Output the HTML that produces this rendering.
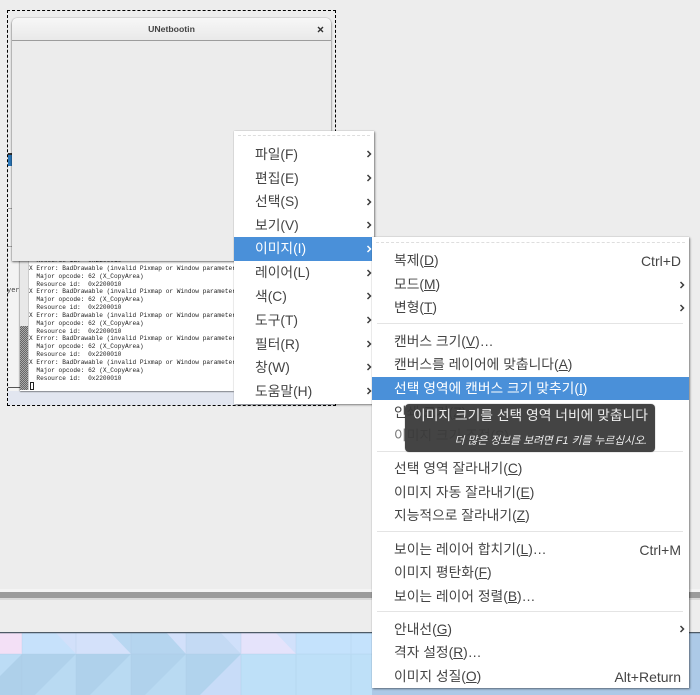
<!DOCTYPE html>
<html lang="ko"><head><meta charset="utf-8"><title>GIMP 이미지 메뉴</title>
<style>
html,body{margin:0;padding:0}
body{width:700px;height:695px;position:relative;overflow:hidden;background:#ededed;font-family:"Liberation Sans","Noto Sans CJK KR",sans-serif;color:#3a3a3a}
.a{position:absolute}
.menu{position:absolute;background:#fff;box-shadow:1px 1px 2px rgba(0,0,0,.45),0 0 1px rgba(0,0,0,.25)}
.t{position:absolute;white-space:pre;font-size:13.8px;line-height:20px;height:20px;margin-top:1px;color:#444;filter:blur(.25px)}
.s{position:absolute;white-space:pre;font-size:14px;line-height:20px;height:20px;margin-top:1px;color:#444;text-align:right;filter:blur(.25px)}
.sep{position:absolute;height:1px;background:#e4e4e4;left:5px;width:306px}
.hl{position:absolute;background:#4a90d9}
u{text-underline-offset:1px}
svg.ar{position:absolute;width:6px;height:10px;overflow:visible}
.term{position:absolute;left:29px;width:205px;overflow:hidden;font:6.17px/7.85px "Liberation Mono",monospace;color:#222;white-space:pre;filter:blur(.2px)}
</style></head><body>

<!-- wallpaper -->
<svg class="a" style="left:0;top:632px" width="700" height="63" viewBox="0 632 700 63">
<rect x="0" y="632" width="700" height="63" fill="#b9daf2"/>
<rect x="0" y="632" width="22" height="22" fill="#f3e0f6"/>
<rect x="22" y="632" width="54" height="22" fill="#c6e1fb"/>
<polygon points="55,632 76,632 76,654" fill="#d2e0fa"/>
<rect x="76" y="632" width="55" height="22" fill="#b8d7f1"/>
<polygon points="76,632 110,632 131,654 76,654" fill="#d4e1fa"/>
<rect x="131" y="632" width="55" height="22" fill="#d2e0fa"/>
<polygon points="131,632 166,632 186,654 131,654" fill="#b5d5ef"/>
<rect x="186" y="632" width="55" height="22" fill="#d0e0fa"/>
<polygon points="186,632 220,632 241,654 186,654" fill="#c4daf4"/>
<rect x="241" y="632" width="55" height="22" fill="#d1e1fb"/>
<polygon points="241,632 275,632 296,654 241,654" fill="#e5e3fb"/>
<rect x="296" y="632" width="404" height="22" fill="#c4e2fc"/>
<rect x="0" y="654" width="22" height="41" fill="#aed0ea"/>
<polygon points="0,654 22,654 0,676" fill="#bcdcf5"/>
<polygon points="22,654 76,654 35,695 22,695" fill="#afd1eb"/>
<polygon points="76,654 131,654 90,695 76,695" fill="#afd1eb"/>
<polygon points="131,654 186,654 145,695 131,695" fill="#b0d2ec"/>
<polygon points="186,654 241,654 200,695 186,695" fill="#b1d3ed"/>
<polygon points="241,654 241,695 200,695" fill="#c8dcf8"/>
<rect x="241" y="654" width="131" height="41" fill="#bee0f8"/>
<rect x="372" y="632" width="328" height="63" fill="#acc9e7"/>
<path d="M22 632V695M76 632V695M131 632V695M186 632V695M241 632V695M296 632V695M351 632V695M0 654H372" stroke="#a9c8e2" stroke-opacity=".3" stroke-width="1" fill="none"/>
<rect x="0" y="632" width="700" height="1" fill="#4d5a66"/>
<rect x="0" y="633" width="700" height="1" fill="#4d5a66" fill-opacity=".25"/>
</svg>

<!-- window band -->
<div class="a" style="left:0;top:589px;width:700px;height:3px;background:#f4f4f4"></div>
<div class="a" style="left:0;top:592px;width:700px;height:6px;background:#9b9b9b"></div>
<div class="a" style="left:0;top:598px;width:700px;height:2px;background:#d9d9d9"></div>

<!-- canvas remnants -->
<div class="a" style="left:8px;top:391px;width:327px;height:14px;background:#e2e6f0"></div>
<div class="a" style="left:9px;top:150px;width:11px;height:241px;background:#f3f3f3"></div>
<div class="a" style="left:8px;top:153px;width:4px;height:2px;background:#333"></div>
<div class="a" style="left:8px;top:155px;width:4px;height:11px;background:#2a76b8"></div>
<div class="a" style="left:8px;top:208px;width:4px;height:1px;background:#aaa"></div>
<div class="a" style="left:8px;top:246px;width:4px;height:1px;background:#aaa"></div>
<div class="a" style="left:8px;top:387px;width:12px;height:1px;background:#555"></div>
<div class="a" style="left:7px;top:286px;width:13px;height:10px;font:7px/10px 'Liberation Mono',monospace;color:#444">yer</div>

<!-- terminal -->
<div class="a" style="left:20px;top:250px;width:214px;height:141px;background:#fff;box-shadow:0 1px 1px rgba(0,0,0,.4),-1px 0 1px rgba(0,0,0,.2)"></div>
<div class="a" style="left:20px;top:250px;width:8px;height:76px;background:#e8e8e8"></div>
<div class="a" style="left:20px;top:326px;width:8px;height:64px;background:repeating-conic-gradient(#666 0 25%,#aaa 0 50%) 0 0/2px 2px"></div>
<div class="a" style="left:28px;top:250px;width:1px;height:140px;background:#ccc"></div>
<div class="term" style="top:257px">  Resource id:  0x2200010
X Error: BadDrawable (invalid Pixmap or Window parameter
  Major opcode: 62 (X_CopyArea)
  Resource id:  0x2200010
X Error: BadDrawable (invalid Pixmap or Window parameter
  Major opcode: 62 (X_CopyArea)
  Resource id:  0x2200010
X Error: BadDrawable (invalid Pixmap or Window parameter
  Major opcode: 62 (X_CopyArea)
  Resource id:  0x2200010
X Error: BadDrawable (invalid Pixmap or Window parameter
  Major opcode: 62 (X_CopyArea)
  Resource id:  0x2200010
X Error: BadDrawable (invalid Pixmap or Window parameter
  Major opcode: 62 (X_CopyArea)
  Resource id:  0x2200010</div>
<div class="a" style="left:30px;top:382px;width:2px;height:6px;border:1px solid #222;background:#fff"></div>

<!-- selection -->
<div class="a" style="left:7px;top:10px;width:327px;height:394px;border:1px dashed #000;box-sizing:content-box"></div>

<!-- UNetbootin window -->
<div class="a" style="left:12px;top:18px;width:319px;height:243px;background:#ececec;border-radius:5px 5px 0 0;box-shadow:0 1px 2px rgba(0,0,0,.55),0 0 1px rgba(0,0,0,.4)"></div>
<div class="a" style="left:12px;top:18px;width:319px;height:22px;border-radius:5px 5px 0 0;background:linear-gradient(#f7f7f7,#e9e9e9);border-bottom:1px solid #9c9c9c"></div>
<div class="a" style="left:12px;top:23px;width:319px;text-align:center;font:bold 8.7px/13px 'Liberation Sans',sans-serif;color:#444">UNetbootin</div>
<svg class="a" style="left:317px;top:26px" width="7" height="7"><path d="M1 1L6 6M6 1L1 6" stroke="#333" stroke-width="1.4" fill="none"/></svg>

<!-- menu 2 -->
<div class="menu" style="left:234px;top:131px;width:140px;height:273px"></div>
<div class="a" style="left:238px;top:135px;width:132px;height:0;border-top:1px dashed #dedede"></div>
<div class="hl" style="left:234px;top:237px;width:138px;height:24px"></div>
<div class="t" style="left:255px;top:144px">파일(F)</div>
<div class="t" style="left:255px;top:168px">편집(E)</div>
<div class="t" style="left:255px;top:191px">선택(S)</div>
<div class="t" style="left:255px;top:215px">보기(V)</div>
<div class="t" style="left:255px;top:238px;color:#fff">이미지(I)</div>
<div class="t" style="left:255px;top:262px">레이어(L)</div>
<div class="t" style="left:255px;top:286px">색(C)</div>
<div class="t" style="left:255px;top:310px">도구(T)</div>
<div class="t" style="left:255px;top:334px">필터(R)</div>
<div class="t" style="left:255px;top:357px">창(W)</div>
<div class="t" style="left:255px;top:381px">도움말(H)</div>
<svg class="ar" style="left:366px;top:149px"><path d="M1.5 2L4.5 5L1.5 8" stroke="#3d3d3d" stroke-width="1.5" fill="none"/></svg>
<svg class="ar" style="left:366px;top:173px"><path d="M1.5 2L4.5 5L1.5 8" stroke="#3d3d3d" stroke-width="1.5" fill="none"/></svg>
<svg class="ar" style="left:366px;top:197px"><path d="M1.5 2L4.5 5L1.5 8" stroke="#3d3d3d" stroke-width="1.5" fill="none"/></svg>
<svg class="ar" style="left:366px;top:220px"><path d="M1.5 2L4.5 5L1.5 8" stroke="#3d3d3d" stroke-width="1.5" fill="none"/></svg>
<svg class="ar" style="left:366px;top:244px"><path d="M1.5 2L4.5 5L1.5 8" stroke="#fff" stroke-width="1.5" fill="none"/></svg>
<svg class="ar" style="left:366px;top:268px"><path d="M1.5 2L4.5 5L1.5 8" stroke="#3d3d3d" stroke-width="1.5" fill="none"/></svg>
<svg class="ar" style="left:366px;top:291px"><path d="M1.5 2L4.5 5L1.5 8" stroke="#3d3d3d" stroke-width="1.5" fill="none"/></svg>
<svg class="ar" style="left:366px;top:315px"><path d="M1.5 2L4.5 5L1.5 8" stroke="#3d3d3d" stroke-width="1.5" fill="none"/></svg>
<svg class="ar" style="left:366px;top:339px"><path d="M1.5 2L4.5 5L1.5 8" stroke="#3d3d3d" stroke-width="1.5" fill="none"/></svg>
<svg class="ar" style="left:366px;top:362px"><path d="M1.5 2L4.5 5L1.5 8" stroke="#3d3d3d" stroke-width="1.5" fill="none"/></svg>
<svg class="ar" style="left:366px;top:386px"><path d="M1.5 2L4.5 5L1.5 8" stroke="#3d3d3d" stroke-width="1.5" fill="none"/></svg>

<!-- menu 3 -->
<div class="menu" style="left:372px;top:237px;width:317px;height:451px">
  <div class="sep" style="top:86px"></div>
  <div class="sep" style="top:214px"></div>
  <div class="sep" style="top:294px"></div>
  <div class="sep" style="top:374px"></div>
</div>
<div class="a" style="left:376px;top:242px;width:309px;height:0;border-top:1px dashed #dedede"></div>
<div class="hl" style="left:372px;top:377px;width:317px;height:23px"></div>
<div class="t" style="left:394px;top:250px">복제(<u>D</u>)</div>
<div class="t" style="left:394px;top:274px">모드(<u>M</u>)</div>
<div class="t" style="left:394px;top:297px">변형(<u>T</u>)</div>
<div class="t" style="left:394px;top:331px">캔버스 크기(<u>V</u>)…</div>
<div class="t" style="left:394px;top:354px">캔버스를 레이어에 맞춥니다(<u>A</u>)</div>
<div class="t" style="left:394px;top:378px;color:#fff">선택 영역에 캔버스 크기 맞추기(<u>I</u>)</div>
<div class="t" style="left:394px;top:402px">인쇄 크기(<u>Z</u>)</div>
<div class="t" style="left:394px;top:425px;color:#777">이미지 크기 조정(<u>S</u>)</div>
<div class="t" style="left:394px;top:458px">선택 영역 잘라내기(<u>C</u>)</div>
<div class="t" style="left:394px;top:482px">이미지 자동 잘라내기(<u>E</u>)</div>
<div class="t" style="left:394px;top:505px">지능적으로 잘라내기(<u>Z</u>)</div>
<div class="t" style="left:394px;top:539px">보이는 레이어 합치기(<u>L</u>)…</div>
<div class="t" style="left:394px;top:562px">이미지 평탄화(<u>F</u>)</div>
<div class="t" style="left:394px;top:586px">보이는 레이어 정렬(<u>B</u>)…</div>
<div class="t" style="left:394px;top:619px">안내선(<u>G</u>)</div>
<div class="t" style="left:394px;top:642px">격자 설정(<u>R</u>)…</div>
<div class="t" style="left:394px;top:666px">이미지 성질(<u>O</u>)</div>
<div class="s" style="right:19px;top:250px">Ctrl+D</div>
<div class="s" style="right:19px;top:539px">Ctrl+M</div>
<div class="s" style="right:19px;top:666px">Alt+Return</div>
<svg class="ar" style="left:679px;top:280px"><path d="M1.5 2L4.5 5L1.5 8" stroke="#3d3d3d" stroke-width="1.5" fill="none"/></svg>
<svg class="ar" style="left:679px;top:303px"><path d="M1.5 2L4.5 5L1.5 8" stroke="#3d3d3d" stroke-width="1.5" fill="none"/></svg>
<svg class="ar" style="left:679px;top:624px"><path d="M1.5 2L4.5 5L1.5 8" stroke="#3d3d3d" stroke-width="1.5" fill="none"/></svg>

<!-- tooltip -->
<div class="a" style="left:405px;top:404px;width:250px;height:48px;background:rgba(56,56,56,.94);border-radius:4px;box-shadow:0 0 1px rgba(0,0,0,.5)"></div>
<div class="t" style="left:413px;top:405px;color:#eee">이미지 크기를 선택 영역 너비에 맞춥니다</div>
<div class="s" style="right:53px;top:430px;color:#eee;font-size:10.8px;font-style:italic">더 많은 정보를 보려면 F1 키를 누르십시오.</div>
</body></html>
